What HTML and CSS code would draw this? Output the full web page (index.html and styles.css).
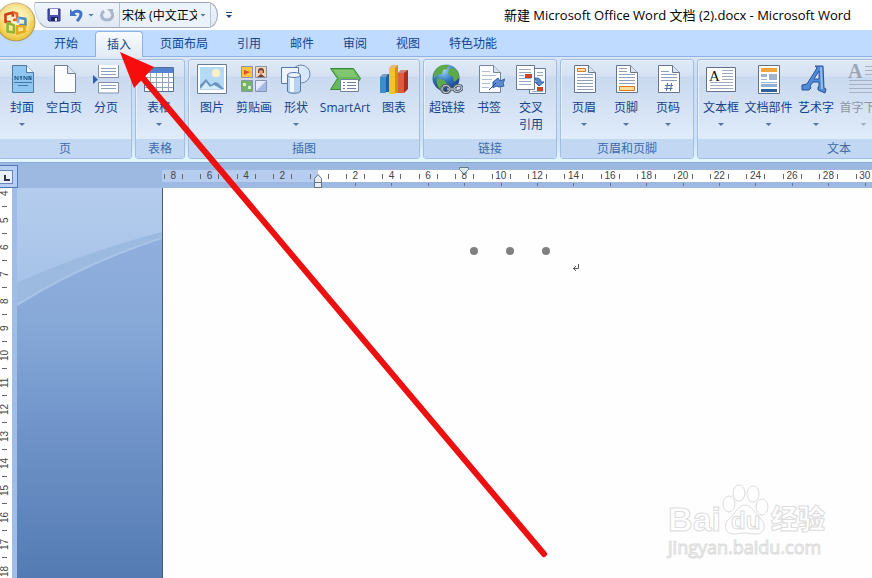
FILE: index.html
```html
<!DOCTYPE html>
<html lang="zh-CN">
<head>
<meta charset="UTF-8">
<title>新建 Microsoft Office Word 文档 (2).docx - Microsoft Word</title>
<link rel="stylesheet" href="styles.css">
</head>
<body>
<div class="window">
	<header class="titlebar">
		<div class="quick">
			<button class="quick-btn save" aria-label="保存">
				<svg width="14" height="14" viewBox="0 0 14 14"><path d="M1 1h12v12H2l-1-1z" fill="#4a55b5" stroke="#2b3180"/><path d="M3 1h8v6H3z" fill="#f4f7ff"/><path d="M4 9h7v4H4z" fill="#20265c"/><path d="M8 10h2v3H8z" fill="#e8edff"/></svg>
			</button>
			<button class="quick-btn undo" aria-label="撤销">
				<svg width="14" height="14" viewBox="0 0 14 14"><path d="M4 5c3-3 8-2 8 1 0 3-2 5-4 7" fill="none" stroke="#3f74c4" stroke-width="3"/><path d="M1 1v7h7z" fill="#3f74c4"/></svg>
			</button>
			<button class="quick-btn drop" aria-label="撤销列表"><i class="caret"></i></button>
			<button class="quick-btn redo" aria-label="重复">
				<svg width="14" height="14" viewBox="0 0 14 14"><path d="M4 3c-4 3-3 9 3 9 6 0 7-6 4-8" fill="none" stroke="#a9b5c8" stroke-width="3"/><path d="M7 1h6v6z" fill="#a9b5c8"/></svg>
			</button>
			<div class="font-box">
				<select class="font-select" aria-label="字体"><option>宋体 (中文正文)</option></select>
				<i class="caret"></i>
			</div>
		</div>
		<button class="quick-more" aria-label="自定义快速访问工具栏"><i class="caret"></i></button>
		<h1 class="title">新建 Microsoft Office Word 文档 (2).docx - Microsoft Word</h1>
		<button class="orb" aria-label="Office 按钮">
			<svg width="40" height="40" viewBox="0 0 38 38">
				<defs><radialGradient id="orb" cx=".5" cy=".45" r=".6"><stop offset="0" stop-color="#fffbe0"/><stop offset=".5" stop-color="#fbe78a"/><stop offset=".85" stop-color="#ecc53c"/><stop offset="1" stop-color="#d9b440"/></radialGradient></defs>
				<circle cx="19" cy="19" r="18" fill="url(#orb)" stroke="#b49a55"/>
				<path d="M2 17a17 17 0 0 1 34 0Q19 21 2 17z" fill="#fff" opacity=".25"/>
				<g fill="none" stroke-width="2.5" stroke-linejoin="round">
					<path d="M14 19H9v-7l7-2v4" stroke="#c9401d"/><path d="M16 10l4 1v6h-4" stroke="#e46a28"/>
					<path d="M21 15l7 1v6h-6" stroke="#4f8fc6"/><path d="M21 15v5" stroke="#7eb3da"/>
					<path d="M11 20v8l6 1v-7z" stroke="#8fb53c"/><path d="M20 23v7l7-2v-5z" stroke="#e9a91f"/>
				</g>
			</svg>
		</button>
	</header>

	<nav class="tabs">
		<button class="tab">开始</button>
		<button class="tab active">插入</button>
		<button class="tab">页面布局</button>
		<button class="tab">引用</button>
		<button class="tab">邮件</button>
		<button class="tab">审阅</button>
		<button class="tab">视图</button>
		<button class="tab">特色功能</button>
	</nav>

	<div class="ribbon">
		<section class="group first">
			<div class="tools">
				<button class="tool">
					<svg class="icon" viewBox="0 0 32 32"><path d="M6.500 2.500h14l7 7v20h-21z" fill="#8fc7f1" stroke="#51789f"/><path d="M20.500 2.500v7h7" fill="#eef8ff" stroke="#51789f"/><path d="M9 17v-4l3 4v-4m2 0l1 2 1-2m-1 2v2m3 0v-4l3 4v-4m2 4v-4l2 4v-4" fill="none" stroke="#23578c"/><path d="M8 19.500h18M12 22.500h10" stroke="#3f77ab"/></svg>
					<span>封面</span><i class="caret"></i>
				</button>
				<button class="tool">
					<svg class="icon" viewBox="0 0 32 32"><path d="M6.500 2.500h13l8 8v19h-21z" fill="#fcfdff" stroke="#6f7e92"/><path d="M19.500 2.500v8h8" fill="#dce5f0" stroke="#6f7e92"/></svg>
					<span>空白页</span>
				</button>
				<button class="tool">
					<svg class="icon" viewBox="0 0 32 32"><path d="M8.500 2v12.500h20V2M8.500 30V19.500h20V30z" fill="#fdfeff" stroke="#8190a6"/><path d="M11 5.500h15M11 8.500h15M11 11.500h15M11 22.500h15M11 25.500h15" stroke="#8b9ebb"/><path d="M3 12l5 4.500L3 21z" fill="#315fb0"/></svg>
					<span>分页</span>
				</button>
			</div>
			<h2 class="group-name">页</h2>
		</section>
		<section class="group">
			<div class="tools">
				<button class="tool">
					<svg class="icon" viewBox="0 0 32 32"><path d="M1.500 4.500h29v24h-29z" fill="#fff" stroke="#566f99"/><path d="M2 5h28v5H2z" fill="#5583cf"/><path d="M2 14.500h28M2 19.500h28M2 24.500h28M7.500 10v18M13.500 10v18M19.500 10v18M25.500 10v18" stroke="#93a4bd"/></svg>
					<span>表格</span><i class="caret"></i>
				</button>
			</div>
			<h2 class="group-name">表格</h2>
		</section>
		<section class="group">
			<div class="tools">
				<button class="tool">
					<svg class="icon" viewBox="0 0 32 32"><path d="M1.500 1.500h29v29h-29z" fill="#fff" stroke="#6a7c92"/><path d="M4 4h24v23H4z" fill="#b4daf5"/><circle cx="20" cy="10" r="4" fill="#fff0c2"/><path d="M4 26v-4l6-6 5 6 4-3 3 1 6 6z" fill="#6b93c2"/><path d="M6 24l4-5 4 5 4-2 7 4H4z" fill="#d7ecfa"/></svg>
					<span>图片</span>
				</button>
				<button class="tool">
					<svg class="icon" viewBox="0 0 32 32"><g stroke="#8495a9"><path d="M3.500 3.500h11v11h-11z" fill="#ffc638"/><path d="M17.500 3.500h11v11h-11z" fill="#f3d8bb"/><path d="M3.500 17.500h11v11h-11z" fill="#73b466"/><path d="M17.500 17.500h11v11h-11z" fill="#a5b9e7"/></g><path d="M6 7l6 2-6 3z" fill="#df5022"/><path d="M20 8a3 3 0 0 1 6 0v2h-6zM19 14l4-3 4 3z" fill="#704033"/><circle cx="23" cy="9" r="2" fill="#dda077"/><path d="M5 20h3v3H5zM10 23h3v3h-3z" fill="#d5edcb"/><path d="M18 18h10L18 28z" fill="#e5ebff"/></svg>
					<span>剪贴画</span>
				</button>
				<button class="tool">
					<svg class="icon" viewBox="0 0 32 32"><circle cx="21" cy="11" r="9" fill="#d9e8f8" stroke="#6b87ad"/><path d="M1.500 4.500h17v16h-17z" fill="#edf4fc" stroke="#5877a4"/><path d="M7.500 12v16c0 3 13 3 13 0V12" fill="#b7d1f0" stroke="#5479ad"/><path d="M10 14h4v15h-4z" fill="#eff7ff"/><ellipse cx="14" cy="12" rx="6.500" ry="2.500" fill="#eaf3fd" stroke="#5479ad"/></svg>
					<span>形状</span><i class="caret"></i>
				</button>
				<button class="tool wide">
					<svg class="icon" viewBox="0 0 32 32"><path d="M1.500 5.500h23l7 10-7 11h-23l7-11z" fill="#64b958" stroke="#39873b"/><path d="M4 7h20l4 7H10z" fill="#94d184" opacity=".6"/><path d="M11.500 16.500h18v12h-18z" fill="#fbfdff" stroke="#71839a"/><path d="M14 19.500h2m2 0h9M14 22.500h2m2 0h9M14 25.500h2m2 0h9" stroke="#6f829b"/></svg>
					<span>SmartArt</span>
				</button>
				<button class="tool">
					<svg class="icon" viewBox="0 0 32 32"><path d="M2 14l3-3h6v18H2z" fill="#205f9e"/><path d="M2 14h6v16H2z" fill="#3f8ccb"/><path d="M11 5l3-3h6v28h-9z" fill="#cf920d"/><path d="M11 5h6v26h-6z" fill="#f5c22e"/><path d="M20 10l3-3h7v19l-4 4h-6z" fill="#a82d20"/><path d="M20 10h6v20h-6z" fill="#df5b3b"/><path d="M2 14l3-3h5l-2 3zM11 5l3-3h6l-3 3zM20 10l3-3h7l-4 3z" fill="#fff" opacity=".4"/></svg>
					<span>图表</span>
				</button>
			</div>
			<h2 class="group-name">插图</h2>
		</section>
		<section class="group">
			<div class="tools">
				<button class="tool">
					<svg class="icon" viewBox="0 0 32 32"><defs><radialGradient id="globe" cx=".4" cy=".2" r=".8"><stop offset="0" stop-color="#a4dcf5"/><stop offset=".5" stop-color="#367cc1"/><stop offset="1" stop-color="#153a86"/></radialGradient></defs><circle cx="15" cy="15" r="13.500" fill="url(#globe)"/><path d="M5 6c4-5 9-4 13-4l-2 4-4 1-1 4-5 1-3 4c-1-4 0-7 2-10zM6 15l7 2 3 4-5 7c-4-3-6-7-5-13zM18 6l5-1c4 3 5 6 5 10l-5 4-1-5-5-3z" fill="#5eaa48"/><g fill="none"><path d="M19 25c-2-4-8-3-8 1s6 5 8 1M23 25c2-4 8-3 8 0s-6 5-8 2M16 26h10" stroke="#53606d" stroke-width="3"/><path d="M19 25c-2-4-8-3-8 1s6 5 8 1M23 25c2-4 8-3 8 0s-6 5-8 2M16 26h10" stroke="#d9e0e6"/></g></svg>
					<span>超链接</span>
				</button>
				<button class="tool">
					<svg class="icon" viewBox="0 0 32 32"><path d="M6.500 2.500h14l7 7v20h-21z" fill="#fcfdff" stroke="#74869e"/><path d="M20.500 2.500v7h7" fill="#d4e0ee" stroke="#74869e"/><path d="M9 8.500h8M9 12.500h14M9 16.500h10M9 20.500h8M9 24.500h7" stroke="#b1bfd3"/><path d="M20 19l5-4 2 3 5-2-2 4 1 3-5 1-3-1-3 2z" fill="#5b8bd0" stroke="#2f5ea8"/><path d="M16 27l7-7" stroke="#234f91"/></svg>
					<span>书签</span>
				</button>
				<button class="tool">
					<svg class="icon" viewBox="0 0 32 32"><path d="M14.500 5.500h16v25h-16z" fill="#f8fbff" stroke="#667b98"/><path d="M1.500 2.500h18v24h-18z" fill="#fff" stroke="#667b98"/><path d="M4 6.500h12M4 9.500h12M4 12.500h5M4 15.500h12M4 18.500h12M4 21.500h12M22 9.500h6M22 12.500h6M17 28.500h11" stroke="#9baac0"/><path d="M10 11h7v4h-7zM22 24h6v4h-6z" fill="#c94529"/><path d="M20 15c4 0 6 1 6 4h3l-5 4-4-4h3c0-1-1-2-3-2z" fill="#5b8bd0" stroke="#2f5ea8"/></svg>
					<span>交叉<br>引用</span>
				</button>
			</div>
			<h2 class="group-name">链接</h2>
		</section>
		<section class="group">
			<div class="tools">
				<button class="tool">
					<svg class="icon" viewBox="0 0 32 32"><path d="M6.500 2.500h14l7 7v20h-21z" fill="#fff" stroke="#65758b"/><path d="M20.500 2.500v7h7" fill="#d9e4f0" stroke="#65758b"/><path d="M9.500 5.500h8v3h-8z" fill="#ffe0aa" stroke="#d37a2c"/><path d="M9 11.500h16M9 14.500h16M9 17.500h16M9 20.500h16M9 23.500h16M9 26.500h16" stroke="#8e9fb7"/></svg>
					<span>页眉</span><i class="caret"></i>
				</button>
				<button class="tool">
					<svg class="icon" viewBox="0 0 32 32"><path d="M6.500 2.500h14l7 7v20h-21z" fill="#fff" stroke="#65758b"/><path d="M20.500 2.500v7h7" fill="#d9e4f0" stroke="#65758b"/><path d="M9 5.500h8M9 8.500h8M9 11.500h16M9 14.500h16M9 17.500h16M9 20.500h16" stroke="#8e9fb7"/><path d="M9.500 23.500h15v4h-15z" fill="#ffdc95" stroke="#d37a2c"/></svg>
					<span>页脚</span><i class="caret"></i>
				</button>
				<button class="tool">
					<svg class="icon" viewBox="0 0 32 32"><path d="M6.500 2.500h14l7 7v20h-21z" fill="#fff" stroke="#65758b"/><path d="M20.500 2.500v7h7" fill="#d9e4f0" stroke="#65758b"/><path d="M9 8.500h8M9 11.500h16M9 14.500h16M9 17.500h16" stroke="#8e9fb7"/><path d="M15.500 20l-1 8M19.500 20l-1 8M13 22.500h8M12.500 25.500h8" stroke="#4a6ea5"/></svg>
					<span>页码</span><i class="caret"></i>
				</button>
			</div>
			<h2 class="group-name">页眉和页脚</h2>
		</section>
		<section class="group text-group">
			<div class="tools">
				<button class="tool">
					<svg class="icon" viewBox="0 0 32 32"><path d="M1.500 4.500h29v24h-29z" fill="#fff" stroke="#607188"/><path d="M17 7.500h11M17 10.500h11M17 13.500h11M17 16.500h11M5 19.500h23M5 22.500h23M5 25.500h23" stroke="#9eabbf"/><text class="letter" x="4" y="18">A</text></svg>
					<span>文本框</span><i class="caret"></i>
				</button>
				<button class="tool four">
					<svg class="icon" viewBox="0 0 32 32"><path d="M5.500 2.500h21v28h-21z" fill="#fff" stroke="#607188"/><path d="M8 5h16v4H8z" fill="#f1a43c"/><path d="M8 11h6v3H8zM16 11h8v6h-8z" fill="#a0b3cf"/><path d="M8 16.500h6M8 19.500h16" stroke="#a0b3cf"/><path d="M8 21h16v3H8z" fill="#93aed4"/><path d="M8 26h16v3H8z" fill="#315f9e"/></svg>
					<span>文档部件</span><i class="caret"></i>
				</button>
				<button class="tool">
					<svg class="icon" viewBox="0 0 32 32"><path d="M2 22l5-1L17 5l-2-2h8l1 22 2 1-1 4-7-3v-3l1-1v-4h-6l-3 4 1 2-2 2H2z" fill="#4f8bd8" stroke="#285394"/><path d="M19 8l-5 8h5z" fill="#dce8f8" stroke="#285394"/><path d="M21 4l1 22" stroke="#91bdf0" stroke-width="2"/></svg>
					<span>艺术字</span><i class="caret"></i>
				</button>
				<button class="tool four" disabled>
					<svg class="icon" viewBox="0 0 32 32"><text class="letter big" x="0" y="15">A</text><path d="M17 3.500h15M17 7.500h15M17 11.500h15M1 17.500h31M1 21.500h31M1 25.500h31M1 29.500h31" stroke="#a9b1bf"/></svg>
					<span>首字下沉</span><i class="caret"></i>
				</button>
			</div>
			<h2 class="group-name">文本</h2>
		</section>
	</div>

	<div class="ruler-row">
		<button class="tab-stop" aria-label="制表符"><i></i></button>
		<div class="ruler">
			<div class="marks">
				<span class="left">8</span><span class="left">6</span><span class="left">4</span><span class="left">2</span><span class="left"></span>
				<span>2</span><span>4</span><span>6</span><span>8</span><span>10</span><span>12</span><span>14</span><span>16</span><span>18</span><span>20</span><span>22</span><span>24</span><span>26</span><span>28</span><span>30</span>
			</div>
			<svg class="indent" width="10" height="16" viewBox="0 0 10 16"><path d="M1.500 9.500v-4l3.500-4 3.500 4v4zM1.500 9.500h7v5h-7z" fill="#e9edf2" stroke="#66727f"/></svg>
			<svg class="indent right" width="10" height="8" viewBox="0 0 10 8"><path d="M.500.500h9v2L5 7 .500 2.500z" fill="#dfeaea" stroke="#5c7f85"/></svg>
		</div>
	</div>

	<main class="workspace">
		<div class="side-ruler">
			<span>4</span><span>5</span><span>6</span><span>7</span><span>8</span><span>9</span><span>10</span><span>11</span><span>12</span><span>13</span><span>14</span><span>15</span><span>16</span><span>17</span><span>18</span>
		</div>
		<div class="backdrop">
			<svg width="145" height="120" viewBox="0 0 145 120">
				<defs><linearGradient id="sky" x2="0" y2="1"><stop offset="0" stop-color="#b4cded"/><stop offset="1" stop-color="#a4c0e8"/></linearGradient></defs>
				<path d="M0 0h145v50Q65 76 0 117z" fill="url(#sky)"/>
				<path d="M0 95Q65 65 145 44v6Q65 76 0 117z" fill="#9cb9df"/>
				<path d="M0 117Q65 76 145 50" fill="none" stroke="#a9c4e8" stroke-width="2"/>
			</svg>
		</div>
		<article class="page">
			<div class="line"><i class="dot"></i><i class="dot"></i><i class="dot"></i>
				<svg class="enter" width="8" height="8" viewBox="0 0 8 8"><path d="M6.500 0v4.500H1M4 2L1.500 4.500 4 7" fill="none" stroke="#555"/></svg>
			</div>
			<div class="watermark">
				<div class="brand"><span>Bai</span>
					<span class="paw">
						<svg width="48" height="52" viewBox="0 0 48 52"><g fill="#fff" stroke="#dcdcdc"><ellipse cx="8" cy="20" rx="6" ry="8"/><ellipse cx="18" cy="9" rx="6" ry="8"/><ellipse cx="32" cy="10" rx="6" ry="8"/><ellipse cx="41" cy="23" rx="6" ry="8"/><path d="M24 21c7 0 10 9 16 14 6 6 3 15-4 15-5 0-8-1-12-1s-7 1-12 1c-8 0-10-10-4-15 6-5 9-14 16-14z"/></g></svg>
						<b>du</b>
					</span>
					<span class="cn">经验</span>
				</div>
				<div class="site">jingyan.baidu.com</div>
			</div>
		</article>
	</main>

	<svg class="pointer" width="430" height="506" viewBox="0 0 430 506"><path d="M22 25L424 502" stroke="#ec1010" stroke-width="6" stroke-linecap="round"/><path d="M0 0l14 36 20-21z" fill="#f80d0d"/></svg>
</div>
</body>
</html>
```

FILE: styles.css
```css
* {
	box-sizing: border-box;
}

body {
	margin: 0;
	font: 12px/17px "Open Sans", "Noto Sans CJK SC", sans-serif;
	color: #15428b;
}

button, select {
	margin: 0;
	padding: 0;
	border: 0;
	background: none;
	font: inherit;
	color: inherit;
}

h1, h2 {
	margin: 0;
	font-size: 12px;
	font-weight: normal;
}

svg {
	display: block;
}

.window {
	position: relative;
	display: flex;
	flex-direction: column;
	height: 100vh;
	overflow: hidden;
	background: #fff;
}

.caret {
	display: block;
	width: 6px;
	height: 3px;
	background: #56749f;
	clip-path: polygon(0 0, 100% 0, 50% 100%);
}

/* title bar */
.titlebar {
	position: relative;
	display: flex;
	align-items: center;
	height: 30px;
	padding: 0 21px 0 34px;
	flex: none;
}

.quick {
	display: flex;
	align-items: center;
	height: 26px;
	padding: 0 6px 0 8px;
	border: 1px solid #9ba7b9;
	border-left-color: #c9d3e0;
	border-radius: 2px 10px 10px 14px / 2px 13px 13px 24px;
	background: linear-gradient(#f1f5fb, #dfe8f4);
}

.quick-btn {
	display: flex;
	align-items: center;
	justify-content: center;
	width: 22px;
	height: 22px;
}

.quick-btn.drop {
	width: 8px;
}

.quick-btn.redo {
	width: 24px;
}

.font-box {
	display: flex;
	align-items: center;
	width: 92px;
	height: 24px;
	padding: 0 4px 0 2px;
	border: solid #b3c3d8;
	border-width: 0 1px;
	background: #eaf2fb;
}

.font-select {
	flex: 1;
	min-width: 0;
	margin-right: 3px;
	appearance: none;
	overflow: hidden;
	text-overflow: clip;
	color: #000;
}

.quick-more {
	margin-left: 8px;
	padding-top: 2px;
	border-top: 1px solid #24417a;
}

.quick-more .caret {
	background: #24417a;
}

.title {
	margin-left: auto;
	font-size: 13px;
	color: #000;
	white-space: nowrap;
}

.orb {
	position: absolute;
	top: 2px;
	left: -4px;
	z-index: 2;
}

/* tabs */
.tabs {
	display: flex;
	gap: 5px;
	height: 27px;
	padding: 1px 0 0 42px;
	flex: none;
	background: #bfdbff;
	border-bottom: 1px solid #8db2e3;
}

.tab {
	padding: 0 12px;
	height: 25px;
	white-space: nowrap;
}

.tab.active {
	height: 26px;
	padding: 0 11px;
	border: 1px solid #8db2e3;
	border-bottom: 0;
	border-radius: 4px 4px 0 0;
	background: linear-gradient(#f7fbff, #e2ebf6);
}

/* ribbon */
.ribbon {
	display: flex;
	gap: 3px;
	height: 106px;
	padding: 2px 0 3px;
	flex: none;
	overflow: hidden;
	background: linear-gradient(#dbe6f5, #c9dbf1 20%, #cfe2f7 80%, #e2f8ff);
	border-bottom: 1px solid #88abd8;
}

.group {
	display: flex;
	flex-direction: column;
	flex: none;
	border: 1px solid #a2bfe2;
	border-radius: 3px;
	background: linear-gradient(#dfe9f6, #d6e2f3 16px, #c9d9ef 17px, #e0ecfa 80px);
	box-shadow: inset 1px 1px 0 #e8f1fb;
}

.group.first {
	margin-left: -2px;
}

.group.text-group {
	width: 284px;
}

.tools {
	display: flex;
	flex: 1;
	padding: 3px 4px 0 2px;
}

.tool {
	display: flex;
	flex-direction: column;
	align-items: center;
	min-width: 42px;
	line-height: 17px;
	white-space: nowrap;
}

.tool.wide {
	width: 56px;
}

.tool.four {
	width: 53px;
}

.tool .icon {
	width: 32px;
	height: 32px;
	flex: none;
	margin-bottom: 4px;
}

.tool .caret {
	margin-top: 7px;
}

.tool:disabled {
	color: #8d96a5;
}

.tool:disabled .caret {
	background: #a9b1bf;
}

.group-name {
	height: 19px;
	line-height: 19px;
	text-align: center;
	color: #3e6aaa;
	background: #c2d8f2;
}

.letter {
	font: 15px "Liberation Serif", serif;
	fill: #111;
}

.letter.big {
	font-size: 20px;
	font-weight: bold;
	fill: #9ba5b5;
}

/* rulers */
.ruler-row {
	display: flex;
	height: 25px;
	flex: none;
	background: #9db9e2;
}

.tab-stop {
	display: flex;
	align-items: center;
	width: 18px;
	height: 23px;
	margin: 2px 144px 0 0;
	border: 1px solid #5279b8;
	border-left: 0;
	background: #b7cef0;
	flex: none;
}

.tab-stop i {
	width: 13px;
	height: 14px;
	border: 1px solid #6487bd;
	border-left: 0;
	background: linear-gradient(#334, #334) 4px 4px / 2px 6px no-repeat, linear-gradient(#334, #334) 4px 8px / 6px 2px no-repeat, #e8f0fb;
}

.ruler {
	position: relative;
	flex: 1;
	min-width: 0;
	overflow: hidden;
	padding-top: 7px;
}

.marks {
	display: grid;
	grid-template-columns: repeat(20, 1fr);
	width: 728px;
	margin-left: -7px;
	font: 10px/12px "Liberation Sans", sans-serif;
	color: #444;
	text-align: center;
	background: linear-gradient(90deg, #b6cdf0 163px, #fff 163px) 0 0 / 100% 12px no-repeat;
}

.marks span {
	height: 18px;
	background:
		linear-gradient(#666, #666) 9px 4px / 1px 5px no-repeat,
		linear-gradient(#666, #666) 27px 4px / 1px 5px no-repeat,
		linear-gradient(#5f789e, #5f789e) 18px 13px / 1px 3px no-repeat;
}

.marks .left {
	background:
		linear-gradient(#666, #666) 9px 4px / 1px 5px no-repeat,
		linear-gradient(#666, #666) 27px 4px / 1px 5px no-repeat;
}

.indent {
	position: absolute;
	left: 151px;
	top: 10px;
}

.indent.right {
	left: 297px;
	top: 4px;
}

.workspace {
	display: flex;
	flex: 1;
	min-height: 0;
	overflow: hidden;
}

.side-ruler {
	width: 17px;
	flex: none;
	margin-top: -8px;
	clip-path: inset(8px 0 0);
	border-right: 5px solid #a0bde8;
	background: #fff;
	font: 10px/10px "Liberation Sans", sans-serif;
	color: #444;
}

.side-ruler span {
	display: flex;
	align-items: center;
	justify-content: center;
	width: 10px;
	height: 27px;
	writing-mode: vertical-rl;
	transform: rotate(180deg);
	background: linear-gradient(#666, #666) 3px 0 / 5px 1px no-repeat;
}

.backdrop {
	width: 146px;
	flex: none;
	overflow: hidden;
	border-right: 1px solid #4c5d7c;
	background: linear-gradient(#96b1df, #88aad9 33%, #7094ca 62%, #537bb2);
}

/* document */
.page {
	position: relative;
	flex: 1;
	min-width: 0;
	background: #fefefe;
}

.line {
	display: flex;
	gap: 28px;
	padding: 59px 0 0 307px;
}

.dot {
	width: 8px;
	height: 8px;
	border-radius: 4px;
	background: #808080;
}

.enter {
	margin: 17px 0 0 -6px;
}

.watermark {
	position: absolute;
	right: 47px;
	bottom: 20px;
	color: #fff;
	-webkit-text-stroke: 1px #dcdcdc;
}

.brand {
	display: flex;
	align-items: flex-end;
	height: 52px;
	font: bold 34px/34px "Liberation Sans", sans-serif;
}

.paw {
	position: relative;
}

.paw b {
	position: absolute;
	left: 10px;
	bottom: 0;
	font-size: 24px;
	line-height: 30px;
}

.cn {
	margin-left: 2px;
	font: 900 27px/36px "Noto Sans CJK SC", sans-serif;
}

.site {
	font: 18px/22px "Open Sans", sans-serif;
}

/* red arrow over the window */
.pointer {
	position: absolute;
	left: 120px;
	top: 52px;
	pointer-events: none;
}
```
